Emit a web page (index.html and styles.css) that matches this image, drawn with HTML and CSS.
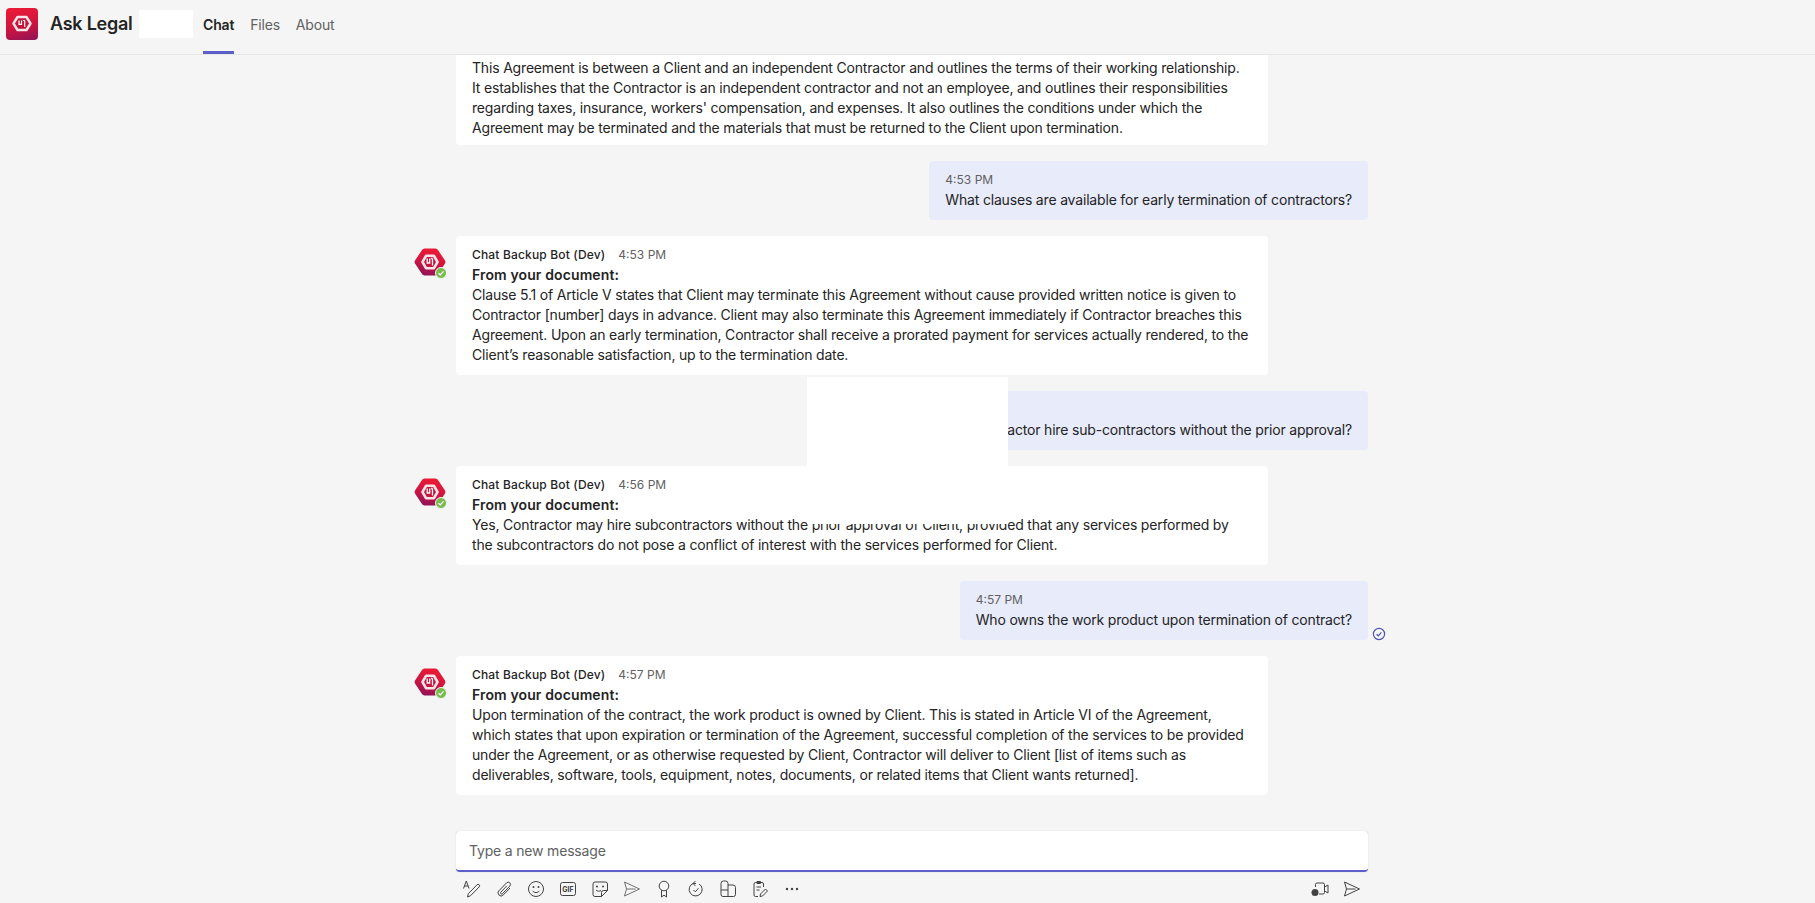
FILE: index.html
```html
<!DOCTYPE html>
<html lang="en">
<head>
    <meta charset="UTF-8">
    <title>Ask Legal</title>
    <link rel="stylesheet" href="styles.css">
</head>
<body>
    <svg class="defs" width="0" height="0">
        <defs>
            <linearGradient id="brand" x1="0.65" y1="0" x2="0.35" y2="1">
                <stop offset="0" stop-color="#ee1c34"/>
                <stop offset="0.55" stop-color="#cf1440"/>
                <stop offset="1" stop-color="#8e1458"/>
            </linearGradient>
            <g id="bot-hex">
                <path d="M8 2a3 3 0 0 1 2.500-1.500h11a3 3 0 0 1 2.500 1.500l7 10.500a3 3 0 0 1 0 3l-7 10.500a3 3 0 0 1-2.500 1.500h-11a3 3 0 0 1-2.500-1.500l-7-10.500a3 3 0 0 1 0-3z" fill="url(#brand)"/>
                <path d="M12 7.800h8l3.500 6.200-3.500 6.200h-8L8.500 14z" fill="#c4143c" stroke="#fbe4e8" stroke-width="2.600" stroke-linejoin="round"/>
                <path d="M13.200 10.500v4.500h2.500v-4.500M18.500 10.500v7M16.900 10.500h1.600" fill="none" stroke="#fff" stroke-width="1.300"/>
            </g>
            <g id="check-badge">
                <path d="M1.500 4.200l1.800 1.700 3.200-3.600" fill="none" stroke="#fff" stroke-width="1.200"/>
            </g>
        </defs>
    </svg>

    <header class="topbar">
        <div class="app-logo">
            <svg width="20" height="17" viewBox="0 0 20 17">
                <path d="M5.500 2h9l4 6.500-4 6.500h-9l-4-6.500z" fill="#c4143c" stroke="#fbe4e8" stroke-width="2.400" stroke-linejoin="round"/>
                <path d="M7 5.500v3.800h2.500V5.500M12.700 5.500v6.500M11 5.500h1.700" fill="none" stroke="#fff" stroke-width="1.200"/>
            </svg>
        </div>
        <h1 class="app-name">Ask Legal</h1>
        <div class="name-mask"></div>
        <nav class="tabs">
            <a class="tab active">Chat</a>
            <a class="tab">Files</a>
            <a class="tab">About</a>
        </nav>
    </header>

    <main class="chat">
        <div class="messages">
            <div class="msg-bot">
                <div class="avatar-slot"></div>
                <div class="bubble bot clipped">
                    <p>This Agreement is between a Client and an independent Contractor and outlines the terms of their working relationship.<br>It establishes that the Contractor is an independent contractor and not an employee, and outlines their responsibilities regarding taxes, insurance, workers' compensation, and expenses. It also outlines the conditions under which the Agreement may be terminated and the materials that must be returned to the Client upon termination.</p>
                </div>
            </div>

            <div class="msg-me">
                <div class="bubble me">
                    <div class="time-me">4:53 PM</div>
                    <p>What clauses are available for early termination of contractors?</p>
                </div>
            </div>

            <div class="msg-bot">
                <div class="avatar-slot">
                    <svg class="bot-logo" width="32" height="28" viewBox="0 0 32 28"><use href="#bot-hex"/></svg>
                    <span class="status"><svg width="8" height="8" viewBox="0 0 8 8"><use href="#check-badge"/></svg></span>
                </div>
                <div class="bubble bot">
                    <div class="meta"><span class="sender">Chat Backup Bot (Dev)</span><span class="time">4:53 PM</span></div>
                    <b>From your document:</b>
                    <p>Clause 5.1 of Article V states that Client may terminate this Agreement without cause provided written notice is given to Contractor [number] days in advance. Client may also terminate this Agreement immediately if Contractor breaches this Agreement. Upon an early termination, Contractor shall receive a prorated payment for services actually rendered, to the Client’s reasonable satisfaction, up to the termination date.</p>
                </div>
            </div>

            <div class="msg-me">
                <div class="bubble me">
                    <div class="time-me">4:56 PM</div>
                    <p>Can the Contractor hire sub-contractors without the prior approval?</p>
                </div>
            </div>

            <div class="msg-bot">
                <div class="avatar-slot">
                    <svg class="bot-logo" width="32" height="28" viewBox="0 0 32 28"><use href="#bot-hex"/></svg>
                    <span class="status"><svg width="8" height="8" viewBox="0 0 8 8"><use href="#check-badge"/></svg></span>
                </div>
                <div class="bubble bot">
                    <div class="meta"><span class="sender">Chat Backup Bot (Dev)</span><span class="time">4:56 PM</span></div>
                    <b>From your document:</b>
                    <p>Yes, Contractor may hire subcontractors without the prior approval of Client, provided that any services performed by the subcontractors do not pose a conflict of interest with the services performed for Client.</p>
                </div>
            </div>

            <div class="msg-me">
                <div class="bubble me">
                    <div class="time-me">4:57 PM</div>
                    <p>Who owns the work product upon termination of contract?</p>
                </div>
                <svg class="seen" width="14" height="14" viewBox="0 0 14 14"><circle cx="7" cy="7" r="5.600" fill="none" stroke="#4f52b2" stroke-width="1.200"/><path d="M4.600 7.200l1.700 1.600 3.100-3.400" fill="none" stroke="#4f52b2" stroke-width="1.200"/></svg>
            </div>

            <div class="msg-bot">
                <div class="avatar-slot">
                    <svg class="bot-logo" width="32" height="28" viewBox="0 0 32 28"><use href="#bot-hex"/></svg>
                    <span class="status"><svg width="8" height="8" viewBox="0 0 8 8"><use href="#check-badge"/></svg></span>
                </div>
                <div class="bubble bot">
                    <div class="meta"><span class="sender">Chat Backup Bot (Dev)</span><span class="time">4:57 PM</span></div>
                    <b>From your document:</b>
                    <p>Upon termination of the contract, the work product is owned by Client. This is stated in Article VI of the Agreement, which states that upon expiration or termination of the Agreement, successful completion of the services to be provided under the Agreement, or as otherwise requested by Client, Contractor will deliver to Client [list of items such as deliverables, software, tools, equipment, notes, documents, or related items that Client wants returned].</p>
                </div>
            </div>
        </div>

        <div class="composer">
            <div class="input-box">Type a new message</div>
            <div class="toolbar">
                <div class="tools">
                    <!-- format -->
                    <svg class="ico" viewBox="0 0 20 20"><path d="M1.500 9.500l2.800-7.500 2.800 7.500M2.500 7h3.600M5.500 18l.8-3.300 8.700-8.900a1.500 1.500 0 0 1 2.200 2.100l-8.700 8.900z"/></svg>
                    <!-- attach -->
                    <svg class="ico" viewBox="0 0 20 20"><path d="M16 9l-6.700 7a3 3 0 0 1-4.400-4.200l7.700-8a2.300 2.300 0 0 1 3.300 3.200l-7.400 7.700a1.100 1.100 0 0 1-1.600-1.600l6-6.300"/></svg>
                    <!-- emoji -->
                    <svg class="ico" viewBox="0 0 20 20"><circle cx="10" cy="10" r="7.500"/><path d="M6.500 11.800c1.700 2.400 5.300 2.400 7 0"/><circle class="dot" cx="7.500" cy="8" r="1"/><circle class="dot" cx="12.500" cy="8" r="1"/></svg>
                    <!-- gif -->
                    <svg class="ico" viewBox="0 0 20 20"><rect x="2.500" y="3.500" width="15" height="13" rx="2"/><text x="10" y="12.600" class="gif">GIF</text></svg>
                    <!-- sticker -->
                    <svg class="ico" viewBox="0 0 20 20"><path d="M11.500 17.500H5a2 2 0 0 1-2-2V5a2 2 0 0 1 2-2h10.500a2 2 0 0 1 2 2v6.500zM11.500 17.500v-4a2 2 0 0 1 2-2h4M6 11c1.500 1.500 3.500 1.500 5 .5"/><circle class="dot" cx="7" cy="7.500" r="1"/><circle class="dot" cx="13" cy="7.500" r="1"/></svg>
                    <!-- send later -->
                    <svg class="ico light" viewBox="0 0 20 20"><path d="M2.500 3l15 7-15 7 2-7zM4.500 10h9"/></svg>
                    <!-- praise -->
                    <svg class="ico" viewBox="0 0 20 20"><circle cx="10" cy="7" r="4.800"/><path d="M7.500 11.200V18l2.500-1.800 2.500 1.800v-6.800"/></svg>
                    <!-- loop -->
                    <svg class="ico" viewBox="0 0 20 20"><path d="M13.200 5A6.500 6.500 0 1 1 7 4.500h3M9.500 2L7 4.500 9.500 7M7.500 11l1.800 1.800 3.200-3.600"/></svg>
                    <!-- apps -->
                    <svg class="ico" viewBox="0 0 20 20"><path d="M3 4.500a2.500 2.500 0 0 1 2.500-2.500h2A2.500 2.500 0 0 1 10 4.500V17.500H5A2 2 0 0 1 3 15.500zM10 6h5a2.500 2.500 0 0 1 2.500 2.500v7a2 2 0 0 1-2 2H10M3 11h7"/></svg>
                    <!-- notes -->
                    <svg class="ico" viewBox="0 0 20 20"><path d="M13.500 8V5a1.500 1.500 0 0 0-1.500-1.500H5.500A1.500 1.500 0 0 0 4 5v11a1.500 1.500 0 0 0 1.500 1.500H8M7 2.500h3.500v2H7zM6.500 8h4.500M6.500 11h3M10 17.500l.5-2.500 5-5 2 2-5 5z"/></svg>
                    <!-- more -->
                    <svg class="ico" viewBox="0 0 20 20"><circle class="dot" cx="5" cy="10" r="1.200"/><circle class="dot" cx="10" cy="10" r="1.200"/><circle class="dot" cx="15" cy="10" r="1.200"/></svg>
                </div>
                <div class="tools-right">
                    <!-- meet now -->
                    <svg class="ico" viewBox="0 0 20 20"><path d="M5.500 8V5.500A1.500 1.500 0 0 1 7 4h6A1.500 1.500 0 0 1 14.500 5.500v8a1.500 1.500 0 0 1-1.500 1.500H9M14.500 8l3.500-2v8l-3.500-2"/><circle class="dot" cx="5" cy="13.500" r="3.500"/></svg>
                    <!-- send -->
                    <svg class="ico" viewBox="0 0 20 20"><path d="M2.500 3l15 7-15 7 2-7zM4.500 10h9"/></svg>
                </div>
            </div>
        </div>

        <div class="mask"></div>
    </main>
</body>
</html>
```

FILE: styles.css
```css
body {
    font-family: 'Inter', 'Liberation Sans', sans-serif;
    margin: 0;
    padding: 0;
    height: 903px;
    overflow: hidden;
    display: flex;
    flex-direction: column;
    background-color: #f5f5f5;
    color: #242424;
    font-size: 14px;
    line-height: 20px;
    letter-spacing: -0.18px;
}

.defs {
    position: absolute;
}

.topbar {
    height: 54px;
    flex: none;
    display: flex;
    align-items: center;
    border-bottom: 1px solid #e6e6e6;
    position: relative;
    z-index: 2;
    background-color: #f5f5f5;
}

.app-logo {
    width: 32px;
    height: 32px;
    margin-left: 6px;
    margin-top: -7px;
    border-radius: 4px;
    background: linear-gradient(165deg, #ee1c34 0%, #cf1440 55%, #8e1458 100%);
    display: flex;
    align-items: center;
    justify-content: center;
}

.app-name {
    font-size: 18px;
    font-weight: 600;
    line-height: 24px;
    margin: -6px 0 0 12px;
    width: 89px;
    white-space: nowrap;
    letter-spacing: -0.25px;
}

.name-mask {
    width: 54px;
    height: 28px;
    margin-top: -6px;
    background-color: #fff;
}

.tabs {
    display: flex;
    margin-left: 10px;
    height: 54px;
    gap: 16px;
}

.tab {
    height: 51px;
    line-height: 50px;
    color: #616161;
    border-bottom: 3px solid transparent;
}

.tab.active {
    color: #242424;
    font-weight: 600;
    border-bottom-color: #5b5fc7;
}

.chat {
    flex: 1;
    min-height: 0;
    display: flex;
    flex-direction: column;
    position: relative;
}

.messages {
    flex: 1;
    min-height: 0;
    display: flex;
    flex-direction: column;
    justify-content: flex-end;
    overflow: hidden;
    gap: 16px;
    padding-bottom: 36px;
}

.msg-bot {
    flex: none;
    display: flex;
    margin-left: 414px;
    width: 854px;
}

.avatar-slot {
    width: 32px;
    margin-right: 10px;
    padding-top: 12px;
    position: relative;
    flex: none;
}

.bot-logo {
    display: block;
}

.status {
    position: absolute;
    right: -1px;
    top: 31px;
    width: 10px;
    height: 10px;
    border-radius: 50%;
    background-color: #78bb4e;
    border: 1px solid #f5f5f5;
    display: flex;
    align-items: center;
    justify-content: center;
}

.bubble {
    border-radius: 4px;
    box-sizing: border-box;
}

.bubble p {
    margin: 0;
}

.bubble.bot {
    background-color: #fff;
    width: 812px;
    padding: 8px 16px 10px 16px;
}

.bubble.bot.clipped {
    padding-bottom: 7px;
}

.bubble.bot b {
    font-weight: 600;
    letter-spacing: 0.12px;
    display: block;
}

.meta {
    display: flex;
    gap: 13px;
    font-size: 12px;
    line-height: 21px;
    letter-spacing: 0;
}

.sender {
    font-weight: 500;
    letter-spacing: 0.16px;
}

.time {
    color: #616161;
}

.msg-me {
    flex: none;
    display: flex;
    justify-content: flex-end;
    width: 1368px;
    position: relative;
}

.bubble.me {
    background-color: #e8ebfa;
    padding: 9px 16px 10px 16px;
}

.time-me {
    font-size: 12px;
    color: #616161;
    letter-spacing: 0;
}

.seen {
    position: absolute;
    left: 1372px;
    bottom: -1px;
}

.composer {
    flex: none;
    margin-left: 456px;
    width: 912px;
}

.input-box {
    height: 41px;
    box-sizing: border-box;
    background-color: #fff;
    border-radius: 4px;
    border-bottom: 2px solid #5b5fc7;
    box-shadow: 0 0 1px rgba(0, 0, 0, 0.25);
    padding: 10px 13px;
    color: #616161;
    line-height: 20px;
}

.toolbar {
    height: 31px;
    box-sizing: border-box;
    display: flex;
    justify-content: space-between;
    align-items: center;
    padding: 3px 6px 0 6px;
}

.tools,
.tools-right {
    display: flex;
    gap: 12px;
}

.ico {
    width: 20px;
    height: 20px;
    fill: none;
    stroke: #424242;
    stroke-width: 1;
}

.ico.light {
    stroke: #707070;
}

.ico .dot {
    fill: #424242;
    stroke: none;
}

.ico .gif {
    font-size: 7px;
    font-weight: 700;
    letter-spacing: 0;
    text-anchor: middle;
    fill: #424242;
    stroke: none;
}

.mask {
    position: absolute;
    left: 807px;
    top: 322px;
    width: 201px;
    height: 147px;
    background-color: #fff;
}
```
